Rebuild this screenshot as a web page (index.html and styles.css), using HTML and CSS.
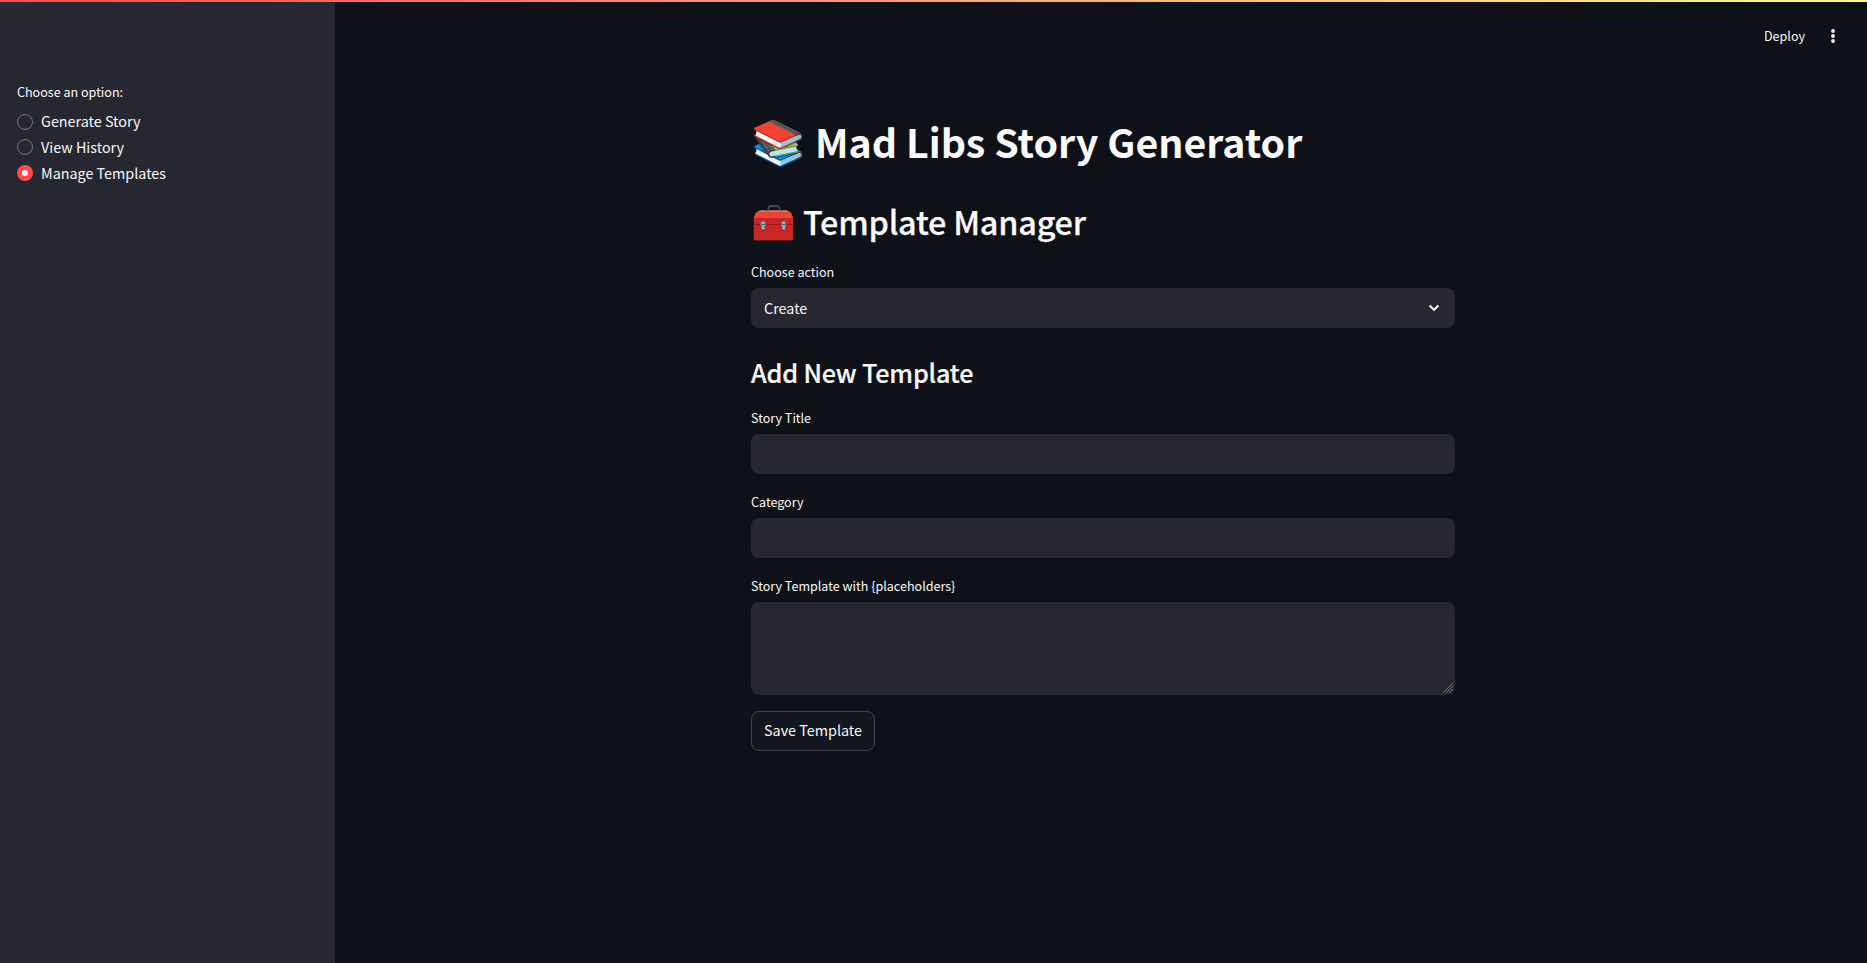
FILE: index.html
```html
<!DOCTYPE html>
<html lang="en">
<head>
<meta charset="utf-8">
<title>Mad Libs Story Generator</title>
<link rel="stylesheet" href="styles.css">
</head>
<body>
<div class="decoration"></div>
<div class="app">
  <aside class="sidebar">
    <p class="label">Choose an option:</p>
    <div class="radios">
      <div class="radio"><span class="dot first"></span><span class="radio-text">Generate Story</span></div>
      <div class="radio"><span class="dot"></span><span class="radio-text">View History</span></div>
      <div class="radio"><span class="dot checked"></span><span class="radio-text">Manage Templates</span></div>
    </div>
  </aside>
  <div class="page">
    <header class="toolbar">
      <span class="deploy">Deploy</span>
      <svg class="kebab" viewBox="0 0 20 20"><circle cx="10" cy="5" r="1.9"/><circle cx="10" cy="10" r="1.9"/><circle cx="10" cy="15" r="1.9"/></svg>
    </header>
    <main class="content">
      <h1 class="title"><span class="emoji">📚</span><span class="title-text">Mad Libs Story Generator</span></h1>
      <h2 class="subtitle"><span class="emoji">🧰</span><span class="subtitle-text">Template Manager</span></h2>
      <div class="field">
        <p class="label">Choose action</p>
        <div class="select"><span class="value">Create</span>
          <svg class="chevron" viewBox="0 0 12 8"><path d="M1.6 1.5 6 5.9l4.4-4.4"/></svg>
        </div>
      </div>
      <h3 class="section">Add New Template</h3>
      <div class="field"><p class="label">Story Title</p><input class="input" type="text"></div>
      <div class="field"><p class="label">Category</p><input class="input" type="text"></div>
      <div class="field area-field"><p class="label">Story Template with {placeholders}</p><textarea class="input area"></textarea>
        <svg class="grip" viewBox="0 0 12 12"><path d="M1 11 11 1M4 11l7-7M7 11l4-4"/></svg>
      </div>
      <button class="save"><span class="save-text">Save Template</span></button>
    </main>
  </div>
</div>
</body>
</html>
```
FILE: styles.css
```css
* { box-sizing: border-box; }
body {
  margin: 0;
  height: 963px;
  overflow: hidden;
  background: #0e1117;
  color: #fafafa;
  font-family: "Noto Sans CJK SC", "Noto Sans", sans-serif;
  font-size: 14.35px;
}
h1, h2, h3, p { margin: 0; }
.decoration {
  position: absolute;
  inset: 0 0 auto 0;
  height: 2px;
  background: linear-gradient(90deg, #ff4b4b, #fffd80);
}
.app { display: flex; height: 963px; }
.sidebar { width: 335px; background: #262730; padding: 80px 17px 0; }
.label { height: 24px; line-height: 24px; margin-bottom: 4px; font-size: 12.55px; white-space: nowrap; }
.radios { display: flex; flex-direction: column; gap: 2px; padding-top: 1px; }
.radio { display: flex; align-items: center; gap: 8px; height: 24px; }
.radio-text { line-height: 24px; }
.dot { width: 16px; height: 16px; border-radius: 50%; border: 1px solid #777880; }
.dot.first { margin-top: 2px; }
.dot.checked { border: 5px solid #ff4b4b; background: #fafafa; }
.page { flex: 1; }
.toolbar {
  display: flex;
  justify-content: flex-end;
  align-items: center;
  gap: 18px;
  height: 72px;
  padding-right: 24px;
}
.deploy { font-size: 12.55px; line-height: 24px; }
.kebab { width: 20px; height: 20px; fill: #fafafa; }
.content { width: 704px; margin-left: 416px; padding-top: 36px; display: flex; flex-direction: column; align-items: stretch; }
.title { height: 80px; font-size: 39.35px; line-height: 70px; font-weight: 700; display: flex; }
.title-text { line-height: 66px; }
.subtitle { height: 72px; font-size: 32.4px; line-height: 70px; font-weight: 500; display: flex; }
.subtitle-text { line-height: 66px; letter-spacing: -0.22px; -webkit-text-stroke: 0.25px #fafafa; }
.emoji { font-family: "Noto Color Emoji", sans-serif; }
.title .emoji { width: 64px; font-size: 44px; }
.subtitle .emoji { width: 52px; font-size: 36px; }
.field { margin-bottom: 16px; }
.select, .input {
  display: flex;
  width: 704px;
  height: 40px;
  border: 0;
  border-radius: 8px;
  background: #262730;
  color: #fafafa;
}
.select { align-items: center; justify-content: space-between; padding: 0 15px 0 13px; }
.value { padding-bottom: 2px; }
.chevron { width: 12px; height: 8px; fill: none; stroke: #fafafa; stroke-width: 2; }
.section { height: 46px; margin-bottom: 16px; font-size: 25.2px; line-height: 56px; font-weight: 500; letter-spacing: -0.17px; -webkit-text-stroke: 0.2px #fafafa; }
.area { height: 93px; resize: none; }
.area-field { position: relative; }
.grip { position: absolute; right: 1px; bottom: 1px; width: 12px; height: 12px; fill: none; stroke: #707177; stroke-width: 1; }
.save {
  width: 124px;
  height: 40px;
  padding: 0 0 4px;
  border: 1px solid #41434a;
  border-radius: 8px;
  background: #131720;
  color: #fafafa;
  font: inherit;
  white-space: nowrap;
}
```
